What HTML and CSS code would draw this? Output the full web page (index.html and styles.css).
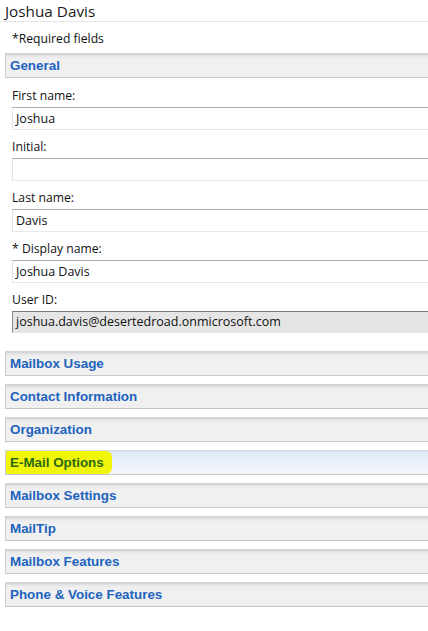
FILE: index.html
```html
<!DOCTYPE html>
<html>
<head>
<meta charset="utf-8">
<link rel="stylesheet" href="styles.css">
</head>
<body>
<div class="page">
  <div class="title">Joshua Davis</div>
  <div class="req">*Required fields</div>
  <div class="sec">General</div>
  <div class="form">
    <div class="lbl">First name:</div>
    <div class="inp">Joshua</div>
    <div class="lbl">Initial:</div>
    <div class="inp"></div>
    <div class="lbl">Last name:</div>
    <div class="inp">Davis</div>
    <div class="lbl">* Display name:</div>
    <div class="inp">Joshua Davis</div>
    <div class="lbl">User ID:</div>
    <div class="inp ro">joshua.davis@desertedroad.onmicrosoft.com</div>
  </div>
  <div class="secs">
    <div class="sec">Mailbox Usage</div>
    <div class="sec">Contact Information</div>
    <div class="sec">Organization</div>
    <div class="sec active"><span class="hl">E-Mail Options</span></div>
    <div class="sec">Mailbox Settings</div>
    <div class="sec">MailTip</div>
    <div class="sec">Mailbox Features</div>
    <div class="sec">Phone &amp; Voice Features</div>
  </div>
</div>
</body>
</html>
```
FILE: styles.css
```css
html, body { margin: 0; padding: 0; background: #fff; }
body { width: 428px; height: 631px; overflow: hidden; font-family: "Open Sans", "Noto Sans", sans-serif; color: #111; }
.page { display: flex; flex-direction: column; }
.title { height: 22px; border-bottom: 1px solid #e4e4e4; padding-left: 5px; font-size: 15.3px; line-height: 22px; color: #1a1a1a; box-sizing: border-box; }
.req { height: 31px; padding-left: 12px; font-size: 12.2px; line-height: 33px; }
.sec {
  margin-left: 5px; height: 25px; box-sizing: border-box;
  background: linear-gradient(#d0d0d6 0, #d9d9de 2px, #e8e8ea 3px, #f0f0f0 6px, #f0f0f0 100%);
  border-left: 1px solid #cfcfcf; border-bottom: 1px solid #c6c6c6;
  font-family: "Liberation Sans", Arial, sans-serif; font-weight: bold; font-size: 13.4px;
  color: #2163be; padding-left: 4px; line-height: 25px; display: flex; align-items: center;
}
.form { display: flex; flex-direction: column; padding-left: 12px; padding-top: 1px; }
.lbl { font-size: 12.2px; height: 28px; box-sizing: border-box; padding-top: 2px; line-height: 29px; }
.inp {
  width: 430px; height: 23px; box-sizing: border-box;
  border-top: 1px solid #ababab; border-left: 1px solid #e2e3ea; border-bottom: 1px solid #e3e9ef;
  font-size: 12.5px; line-height: 21px; padding-left: 3px; background: #fff;
}
.inp.ro { background: #e5e5e5; border-top: 1px solid #777; border-left: 1px solid #888; height: 22px; line-height: 20px; }
.secs { display: flex; flex-direction: column; gap: 8px; padding-top: 18px; }
.sec.active { background: linear-gradient(#d0d6de 0, #dde8f4 2px, #e4edf7 8px, #f4f8fc 100%); }
.hl {
  background: #f1f50a; color: #2a6a12; margin-left: -4px; padding: 0 8px 0 4px;
  height: 23px; line-height: 23px; border-radius: 2px 6px 6px 2px; display: inline-block;
}
```
